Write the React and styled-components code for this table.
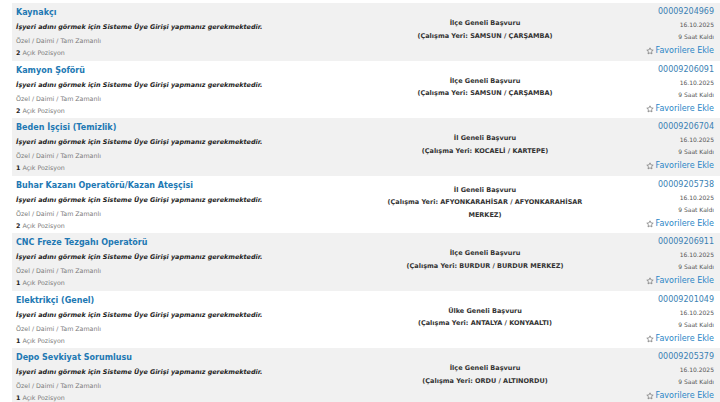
import React from "react";
import styled, { createGlobalStyle } from "styled-components";

const GlobalStyle = createGlobalStyle`
  html, body {
    margin: 0;
    padding: 0;
    background: #ffffff;
  }
  body {
    font-family: "DejaVu Sans", Verdana, sans-serif;
    color: #333;
  }
`;

const jobs = [
  { title: "Kaynakçı", open: 2, scope: "İlçe Geneli Başvuru", place: "SAMSUN / ÇARŞAMBA", no: "00009204969" },
  { title: "Kamyon Şoförü", open: 2, scope: "İlçe Geneli Başvuru", place: "SAMSUN / ÇARŞAMBA", no: "00009206091" },
  { title: "Beden İşçisi (Temizlik)", open: 1, scope: "İl Geneli Başvuru", place: "KOCAELİ / KARTEPE", no: "00009206704" },
  { title: "Buhar Kazanı Operatörü/Kazan Ateşçisi", open: 2, scope: "İl Geneli Başvuru", place: "AFYONKARAHİSAR / AFYONKARAHİSAR MERKEZ", no: "00009205738" },
  { title: "CNC Freze Tezgahı Operatörü", open: 1, scope: "İlçe Geneli Başvuru", place: "BURDUR / BURDUR MERKEZ", no: "00009206911" },
  { title: "Elektrikçi (Genel)", open: 1, scope: "Ülke Geneli Başvuru", place: "ANTALYA / KONYAALTI", no: "00009201049" },
  { title: "Depo Sevkiyat Sorumlusu", open: 1, scope: "İlçe Geneli Başvuru", place: "ORDU / ALTINORDU", no: "00009205379" },
];

const List = styled.div`
  padding: 3px 0 0 12px;
`;

const Row = styled.div`
  display: grid;
  grid-template-columns: 1fr 210px 124px;
  height: 57.5px;
  padding: 0 6px 0 4px;
  background: ${(p) => (p.$shaded ? "#f1f1f1" : "#ffffff")};
  box-sizing: border-box;
`;

const Info = styled.div`
  display: flex;
  flex-direction: column;
  padding-top: 3px;
  white-space: nowrap;
`;

const Title = styled.a`
  font-size: 8px;
  font-weight: bold;
  line-height: 14px;
  color: #2178b3;
  text-decoration: none;
`;

const Notice = styled.div`
  font-size: 6.4px;
  font-weight: bold;
  font-style: italic;
  line-height: 15px;
  color: #222;
`;

const Meta = styled.div`
  font-size: 6.3px;
  line-height: ${(p) => p.$lh}px;
  color: #7a7a7a;

  b {
    color: #222;
  }
`;

const Scope = styled.div`
  align-self: center;
  padding-bottom: 4px;
  text-align: center;
  font-size: 6.5px;
  font-weight: bold;
  line-height: 12.5px;
  color: #333;
`;

const Side = styled.div`
  display: flex;
  flex-direction: column;
  align-items: flex-end;
  padding-top: 3px;
  white-space: nowrap;
`;

const JobNo = styled.a`
  font-size: 8px;
  line-height: 12px;
  color: #3a7fb3;
  text-decoration: none;
`;

const Small = styled.div`
  font-size: 6px;
  line-height: ${(p) => p.$lh}px;
  color: #555;
`;

const Fav = styled.a`
  display: flex;
  align-items: center;
  gap: 2px;
  font-size: 8px;
  line-height: 18px;
  color: #2a86c6;
  text-decoration: none;

  svg {
    width: 8px;
    height: 8px;
  }
`;

const StarIcon = () => (
  <svg viewBox="0 0 24 24" fill="none" stroke="#777" strokeWidth="2.2" strokeLinejoin="round">
    <path d="M12 2.5l2.9 6.2 6.7.8-5 4.6 1.3 6.7L12 17.5l-5.9 3.3 1.3-6.7-5-4.6 6.7-.8z" />
  </svg>
);

export default function App() {
  return (
    <>
      <GlobalStyle />
      <List>
        {jobs.map((j, i) => (
          <Row key={j.no} $shaded={i % 2 === 0}>
            <Info>
              <Title href="#">{j.title}</Title>
              <Notice>İşyeri adını görmek için Sisteme Üye Girişi yapmanız gerekmektedir.</Notice>
              <Meta $lh={12}>Özel / Daimi / Tam Zamanlı</Meta>
              <Meta $lh={11}>
                <b>{j.open}</b> Açık Pozisyon
              </Meta>
            </Info>
            <Scope>
              {j.scope}
              <br />
              {`(Çalışma Yeri: ${j.place})`}
            </Scope>
            <Side>
              <JobNo href="#">{j.no}</JobNo>
              <Small $lh={14}>16.10.2025</Small>
              <Small $lh={10}>9 Saat Kaldı</Small>
              <Fav href="#">
                <StarIcon />
                Favorilere Ekle
              </Fav>
            </Side>
          </Row>
        ))}
      </List>
    </>
  );
}
